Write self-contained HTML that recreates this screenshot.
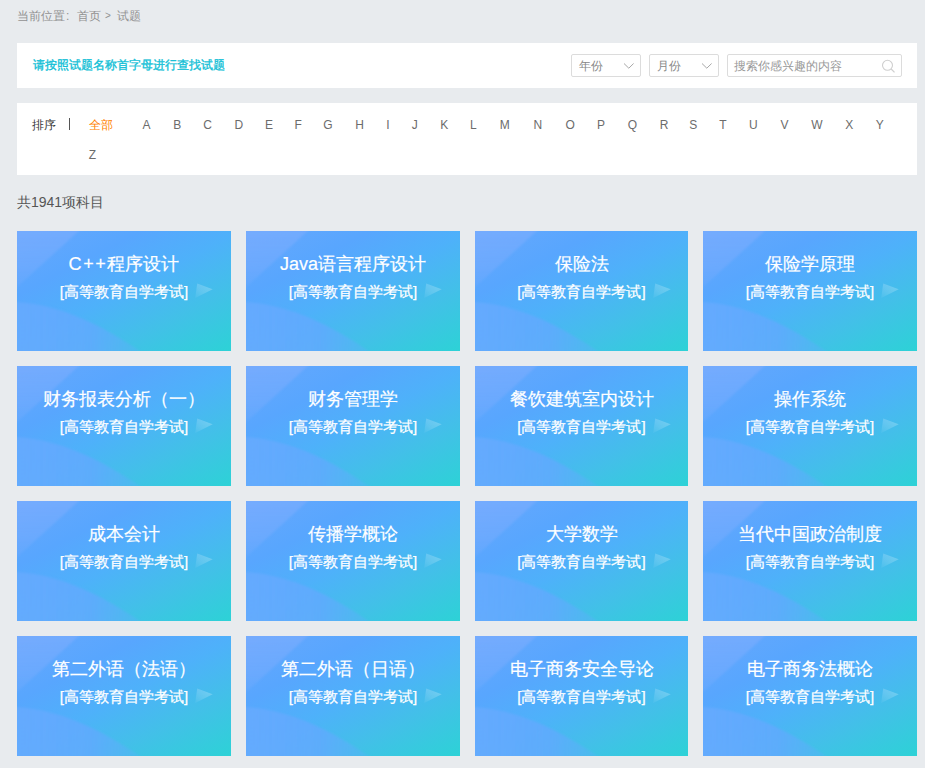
<!DOCTYPE html>
<html><head><meta charset="utf-8">
<style>
*{margin:0;padding:0;box-sizing:border-box}
html,body{width:925px;height:768px;overflow:hidden;background:#e8ebee;font-family:"Liberation Sans",sans-serif}
.abs{position:absolute}
.crumb{left:17px;top:8px;font-size:12px;line-height:16px;color:#929292;white-space:nowrap}
.p1{left:17px;top:43px;width:900px;height:45px;background:#fff}
.p1 .t{left:16px;top:14px;font-size:12px;line-height:16px;color:#12bfd6;font-weight:normal;-webkit-text-stroke:0.35px #12bfd6;white-space:nowrap}
.sel{top:11px;height:23px;border:1px solid #dcdcdc;border-radius:2px;background:#fff}
.sel span{position:absolute;left:7px;top:4px;font-size:12px;line-height:14px;color:#888}
.sel svg{position:absolute}
.p2{left:17px;top:103px;width:900px;height:72px;background:#fff}
.lt{position:absolute;font-size:12px;line-height:16px;color:#6c6c6c;width:20px;text-align:center;white-space:nowrap}
.count{left:17px;top:194px;font-size:14px;line-height:16px;color:#555;white-space:nowrap}
.card{position:absolute;width:214px;height:120px;overflow:hidden;
background:
#52acfa;
color:#fff;text-align:center}
.card svg.bg{position:absolute;left:0;top:0}
.card .h{position:absolute;left:0;width:100%;top:21px;font-size:18px;line-height:24px;white-space:nowrap;-webkit-text-stroke:0.2px #fff}
.card .s{position:absolute;left:0;width:100%;top:51px;font-size:15px;line-height:20px;white-space:nowrap;-webkit-text-stroke:0.25px #fff}
.card .tri{position:absolute;left:177px;top:50px}
</style></head><body>
<svg width="0" height="0" style="position:absolute">
<defs>
<linearGradient id="g0" gradientUnits="userSpaceOnUse" x1="0" y1="0" x2="94.3" y2="182">
<stop offset="0" stop-color="#66a8fd"/><stop offset="0.28" stop-color="#58a6fe"/><stop offset="0.5" stop-color="#4eb1fa"/><stop offset="0.73" stop-color="#42c0e8"/><stop offset="0.97" stop-color="#2fd0d8"/><stop offset="1" stop-color="#2dd2d6"/>
</linearGradient>
<linearGradient id="g1" gradientUnits="userSpaceOnUse" x1="0" y1="0" x2="124" y2="0">
<stop offset="0" stop-color="#66aafe" stop-opacity="0.9"/><stop offset="0.6" stop-color="#62a9fe" stop-opacity="0.8"/><stop offset="1" stop-color="#5eaefc" stop-opacity="0.3"/>
</linearGradient>
<filter id="bl" x="-10%" y="-10%" width="120%" height="120%"><feGaussianBlur stdDeviation="0.8"/></filter>
<linearGradient id="tg" x1="0" y1="1" x2="0.8" y2="0.2"><stop offset="0" stop-color="#fff" stop-opacity="0.04"/><stop offset="0.5" stop-color="#fff" stop-opacity="0.15"/><stop offset="1" stop-color="#fff" stop-opacity="0.23"/></linearGradient>
<filter id="bl2" x="-20%" y="-20%" width="140%" height="140%"><feGaussianBlur stdDeviation="0.5"/></filter>
<linearGradient id="g2" gradientUnits="userSpaceOnUse" x1="0" y1="0" x2="0" y2="58"><stop offset="0" stop-color="rgb(140,176,255)" stop-opacity="0.4"/><stop offset="0.6" stop-color="rgb(140,176,255)" stop-opacity="0.3"/><stop offset="1" stop-color="rgb(140,176,255)" stop-opacity="0.12"/></linearGradient>
<symbol id="cb" viewBox="0 0 214 120">
<rect width="214" height="120" fill="url(#g0)"/>
<path d="M-2 -2 L64 -2 L-2 58 Z" fill="url(#g2)" filter="url(#bl)"/>
<path d="M-2 71 C40 73 80 91 126 122 L-2 122 Z" fill="url(#g1)" filter="url(#bl)"/>
</symbol>
</defs></svg>
<div class="abs crumb">当前位置</div><div class="abs crumb" style="left:66px">:</div><div class="abs crumb" style="left:77px">首页</div><div class="abs crumb" style="left:105px;font-size:10px">&gt;</div><div class="abs crumb" style="left:117px">试题</div>
<div class="abs p1">
 <div class="abs t">请按照试题名称首字母进行查找试题</div>
 <div class="abs sel" style="left:554px;width:70px"><span>年份</span>
  <svg style="left:51px;top:7px" width="12" height="8" viewBox="0 0 12 8"><path d="M1 1.5 L5.8 6.2 L10.6 1.5" fill="none" stroke="#a8a8a8" stroke-width="1"/></svg></div>
 <div class="abs sel" style="left:632px;width:70px"><span>月份</span>
  <svg style="left:51px;top:7px" width="12" height="8" viewBox="0 0 12 8"><path d="M1 1.5 L5.8 6.2 L10.6 1.5" fill="none" stroke="#a8a8a8" stroke-width="1"/></svg></div>
 <div class="abs sel" style="left:710px;width:175px"><span style="left:6px;color:#999">搜索你感兴趣的内容</span>
  <svg style="left:152px;top:3px" width="16" height="16" viewBox="0 0 16 16"><circle cx="7.5" cy="7.3" r="5" fill="none" stroke="#cfcfcf" stroke-width="1.1"/><path d="M11.2 11 L14.5 14.3" stroke="#cfcfcf" stroke-width="1.2"/></svg></div>
</div>
<div class="abs p2">
 <div class="abs" style="left:15px;top:14px;font-size:12px;line-height:16px;color:#333">排序</div>
 <div class="abs" style="left:52px;top:15px;width:1px;height:12px;background:#555"></div>
 <div class="abs" style="left:72px;top:14px;font-size:12px;line-height:16px;color:#ff8000">全部</div>
</div>
<div class="abs count">共1941项科目</div>







<!--GEN-->
<div class="lt" style="left:136.6px;top:117px">A</div>
<div class="lt" style="left:167.3px;top:117px">B</div>
<div class="lt" style="left:197.5px;top:117px">C</div>
<div class="lt" style="left:228.9px;top:117px">D</div>
<div class="lt" style="left:259.1px;top:117px">E</div>
<div class="lt" style="left:288.1px;top:117px">F</div>
<div class="lt" style="left:318.0px;top:117px">G</div>
<div class="lt" style="left:349.6px;top:117px">H</div>
<div class="lt" style="left:378.0px;top:117px">I</div>
<div class="lt" style="left:404.7px;top:117px">J</div>
<div class="lt" style="left:434.2px;top:117px">K</div>
<div class="lt" style="left:463.4px;top:117px">L</div>
<div class="lt" style="left:494.7px;top:117px">M</div>
<div class="lt" style="left:527.8px;top:117px">N</div>
<div class="lt" style="left:560.1px;top:117px">O</div>
<div class="lt" style="left:591.0px;top:117px">P</div>
<div class="lt" style="left:622.5px;top:117px">Q</div>
<div class="lt" style="left:654.0px;top:117px">R</div>
<div class="lt" style="left:683.3px;top:117px">S</div>
<div class="lt" style="left:712.8px;top:117px">T</div>
<div class="lt" style="left:743.4px;top:117px">U</div>
<div class="lt" style="left:774.4px;top:117px">V</div>
<div class="lt" style="left:807.0px;top:117px">W</div>
<div class="lt" style="left:839.2px;top:117px">X</div>
<div class="lt" style="left:869.7px;top:117px">Y</div>
<div class="lt" style="left:82.5px;top:147px">Z</div>
<div class="card" style="left:17px;top:231px"><svg class="bg" width="214" height="120"><use href="#cb"/></svg><div class="h"><span style="letter-spacing:1.6px">C++</span>程序设计</div><div class="s">[高等教育自学考试]</div><svg class="tri" width="22" height="20" viewBox="0 0 22 20"><path d="M3.2 2.6 L18.7 8.3 L1.2 17 Z" fill="url(#tg)" filter="url(#bl2)"/></svg></div>
<div class="card" style="left:246px;top:231px"><svg class="bg" width="214" height="120"><use href="#cb"/></svg><div class="h">Java语言程序设计</div><div class="s">[高等教育自学考试]</div><svg class="tri" width="22" height="20" viewBox="0 0 22 20"><path d="M3.2 2.6 L18.7 8.3 L1.2 17 Z" fill="url(#tg)" filter="url(#bl2)"/></svg></div>
<div class="card" style="left:475px;top:231px;width:213px"><svg class="bg" width="214" height="120"><use href="#cb"/></svg><div class="h">保险法</div><div class="s">[高等教育自学考试]</div><svg class="tri" width="22" height="20" viewBox="0 0 22 20"><path d="M3.2 2.6 L18.7 8.3 L1.2 17 Z" fill="url(#tg)" filter="url(#bl2)"/></svg></div>
<div class="card" style="left:703px;top:231px"><svg class="bg" width="214" height="120"><use href="#cb"/></svg><div class="h">保险学原理</div><div class="s">[高等教育自学考试]</div><svg class="tri" width="22" height="20" viewBox="0 0 22 20"><path d="M3.2 2.6 L18.7 8.3 L1.2 17 Z" fill="url(#tg)" filter="url(#bl2)"/></svg></div>
<div class="card" style="left:17px;top:366px"><svg class="bg" width="214" height="120"><use href="#cb"/></svg><div class="h">财务报表分析（一）</div><div class="s">[高等教育自学考试]</div><svg class="tri" width="22" height="20" viewBox="0 0 22 20"><path d="M3.2 2.6 L18.7 8.3 L1.2 17 Z" fill="url(#tg)" filter="url(#bl2)"/></svg></div>
<div class="card" style="left:246px;top:366px"><svg class="bg" width="214" height="120"><use href="#cb"/></svg><div class="h">财务管理学</div><div class="s">[高等教育自学考试]</div><svg class="tri" width="22" height="20" viewBox="0 0 22 20"><path d="M3.2 2.6 L18.7 8.3 L1.2 17 Z" fill="url(#tg)" filter="url(#bl2)"/></svg></div>
<div class="card" style="left:475px;top:366px;width:213px"><svg class="bg" width="214" height="120"><use href="#cb"/></svg><div class="h">餐饮建筑室内设计</div><div class="s">[高等教育自学考试]</div><svg class="tri" width="22" height="20" viewBox="0 0 22 20"><path d="M3.2 2.6 L18.7 8.3 L1.2 17 Z" fill="url(#tg)" filter="url(#bl2)"/></svg></div>
<div class="card" style="left:703px;top:366px"><svg class="bg" width="214" height="120"><use href="#cb"/></svg><div class="h">操作系统</div><div class="s">[高等教育自学考试]</div><svg class="tri" width="22" height="20" viewBox="0 0 22 20"><path d="M3.2 2.6 L18.7 8.3 L1.2 17 Z" fill="url(#tg)" filter="url(#bl2)"/></svg></div>
<div class="card" style="left:17px;top:501px"><svg class="bg" width="214" height="120"><use href="#cb"/></svg><div class="h">成本会计</div><div class="s">[高等教育自学考试]</div><svg class="tri" width="22" height="20" viewBox="0 0 22 20"><path d="M3.2 2.6 L18.7 8.3 L1.2 17 Z" fill="url(#tg)" filter="url(#bl2)"/></svg></div>
<div class="card" style="left:246px;top:501px"><svg class="bg" width="214" height="120"><use href="#cb"/></svg><div class="h">传播学概论</div><div class="s">[高等教育自学考试]</div><svg class="tri" width="22" height="20" viewBox="0 0 22 20"><path d="M3.2 2.6 L18.7 8.3 L1.2 17 Z" fill="url(#tg)" filter="url(#bl2)"/></svg></div>
<div class="card" style="left:475px;top:501px;width:213px"><svg class="bg" width="214" height="120"><use href="#cb"/></svg><div class="h">大学数学</div><div class="s">[高等教育自学考试]</div><svg class="tri" width="22" height="20" viewBox="0 0 22 20"><path d="M3.2 2.6 L18.7 8.3 L1.2 17 Z" fill="url(#tg)" filter="url(#bl2)"/></svg></div>
<div class="card" style="left:703px;top:501px"><svg class="bg" width="214" height="120"><use href="#cb"/></svg><div class="h">当代中国政治制度</div><div class="s">[高等教育自学考试]</div><svg class="tri" width="22" height="20" viewBox="0 0 22 20"><path d="M3.2 2.6 L18.7 8.3 L1.2 17 Z" fill="url(#tg)" filter="url(#bl2)"/></svg></div>
<div class="card" style="left:17px;top:636px"><svg class="bg" width="214" height="120"><use href="#cb"/></svg><div class="h">第二外语（法语）</div><div class="s">[高等教育自学考试]</div><svg class="tri" width="22" height="20" viewBox="0 0 22 20"><path d="M3.2 2.6 L18.7 8.3 L1.2 17 Z" fill="url(#tg)" filter="url(#bl2)"/></svg></div>
<div class="card" style="left:246px;top:636px"><svg class="bg" width="214" height="120"><use href="#cb"/></svg><div class="h">第二外语（日语）</div><div class="s">[高等教育自学考试]</div><svg class="tri" width="22" height="20" viewBox="0 0 22 20"><path d="M3.2 2.6 L18.7 8.3 L1.2 17 Z" fill="url(#tg)" filter="url(#bl2)"/></svg></div>
<div class="card" style="left:475px;top:636px;width:213px"><svg class="bg" width="214" height="120"><use href="#cb"/></svg><div class="h">电子商务安全导论</div><div class="s">[高等教育自学考试]</div><svg class="tri" width="22" height="20" viewBox="0 0 22 20"><path d="M3.2 2.6 L18.7 8.3 L1.2 17 Z" fill="url(#tg)" filter="url(#bl2)"/></svg></div>
<div class="card" style="left:703px;top:636px"><svg class="bg" width="214" height="120"><use href="#cb"/></svg><div class="h">电子商务法概论</div><div class="s">[高等教育自学考试]</div><svg class="tri" width="22" height="20" viewBox="0 0 22 20"><path d="M3.2 2.6 L18.7 8.3 L1.2 17 Z" fill="url(#tg)" filter="url(#bl2)"/></svg></div>
<!--/GEN-->
</body></html>
